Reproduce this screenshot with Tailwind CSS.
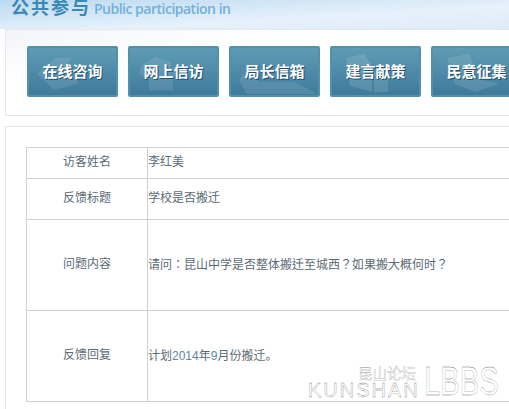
<!DOCTYPE html>
<html lang="zh-CN">
  <head>
    <meta charset="UTF-8" />
    <meta name="viewport" content="width=device-width, initial-scale=1.0" />
    <title>公共参与</title>
    <script src="https://cdn.jsdelivr.net/npm/@tailwindcss/browser@4"></script>
  </head>
  <body class="overflow-hidden">
    <div class="relative h-[409px] w-[509px] overflow-hidden bg-white font-['Liberation_Sans','Noto_Sans_CJK_SC',sans-serif]">
      <!-- header -->
      <div class="h-[29px] bg-gradient-to-br from-[#bcdaf0] via-[#e6f1fb] via-60% to-[#dfebf8]">
        <div class="flex h-[19px] items-end gap-[3px] overflow-hidden pl-[11px]">
          <span class="whitespace-nowrap text-[18px] leading-[22px] font-bold tracking-[2px] text-[#3a88b5]">公共参与</span>
          <span class="mb-[2px] whitespace-nowrap font-['Open_Sans',sans-serif] text-[14px] leading-[16px] font-semibold tracking-[-0.5px] text-[#72b0dc]">Public participation in</span>
        </div>
      </div>

      <!-- nav panel -->
      <div class="ml-[5px] h-[87px] border border-r-0 border-[#e6e8ec] bg-gradient-to-br from-[#f2f4f8] via-white via-30% to-white pl-[21px] pt-[16px]">
        <div class="flex gap-[10px]">
          <a class="relative flex h-[51px] w-[91px] shrink-0 items-center justify-center overflow-hidden rounded-[2px] border-2 border-[#4f92aa] bg-gradient-to-b from-[#5e9cb4] to-[#3f7a9c]">
            <svg class="absolute left-[5px] top-[6px]" width="50" height="38" viewBox="0 0 50 38" fill="#fff" fill-opacity="0.1"><path d="M3 20 22 4 38 4 24 20 44 20 44 30 20 36Z" /></svg>
            <span class="relative whitespace-nowrap text-[15px] leading-none font-bold text-white [text-shadow:1px_1px_0_#24506c]">在线咨询</span>
          </a>
          <a class="relative flex h-[51px] w-[91px] shrink-0 items-center justify-center overflow-hidden rounded-[2px] border-2 border-[#4f92aa] bg-gradient-to-b from-[#5e9cb4] to-[#3f7a9c]">
            <svg class="absolute left-[5px] top-[6px]" width="50" height="38" viewBox="0 0 50 38" fill="#fff" fill-opacity="0.1"><path d="M6 12 20 3 36 8 36 16 44 16 38 26 38 36 14 36 14 26 4 20Z" /></svg>
            <span class="relative whitespace-nowrap text-[15px] leading-none font-bold text-white [text-shadow:1px_1px_0_#24506c]">网上信访</span>
          </a>
          <a class="relative flex h-[51px] w-[91px] shrink-0 items-center justify-center overflow-hidden rounded-[2px] border-2 border-[#4f92aa] bg-gradient-to-b from-[#5e9cb4] to-[#3f7a9c]">
            <svg class="absolute left-[8px] top-[8px]" width="80" height="40" viewBox="0 0 80 40" fill="#fff" fill-opacity="0.1"><path d="M0 24 10 12 20 26 56 26 78 38 8 38Z" /></svg>
            <span class="relative whitespace-nowrap text-[15px] leading-none font-bold text-white [text-shadow:1px_1px_0_#24506c]">局长信箱</span>
          </a>
          <a class="relative flex h-[51px] w-[91px] shrink-0 items-center justify-center overflow-hidden rounded-[2px] border-2 border-[#4f92aa] bg-gradient-to-b from-[#5e9cb4] to-[#3f7a9c]">
            <svg class="absolute left-[12px] top-[6px]" width="50" height="40" viewBox="0 0 50 40" fill="#fff" fill-opacity="0.12"><path d="M2 4 20 0 28 12 28 38 6 32Z M30 18 44 24 44 38 30 38Z" /></svg>
            <span class="relative whitespace-nowrap text-[15px] leading-none font-bold text-white [text-shadow:1px_1px_0_#24506c]">建言献策</span>
          </a>
          <a class="relative flex h-[51px] w-[91px] shrink-0 items-center justify-center overflow-hidden rounded-[2px] border-2 border-[#4f92aa] bg-gradient-to-b from-[#5e9cb4] to-[#3f7a9c]">
            <svg class="absolute left-[12px] top-[6px]" width="60" height="40" viewBox="0 0 60 40" fill="#fff" fill-opacity="0.11"><path d="M2 4 24 0 30 14 30 24 54 30 30 38 10 30Z" /></svg>
            <span class="relative whitespace-nowrap text-[15px] leading-none font-bold text-white [text-shadow:1px_1px_0_#24506c]">民意征集</span>
          </a>
        </div>
      </div>

      <!-- detail panel -->
      <div class="ml-[5px] mt-[10px] h-[283px] border border-r-0 border-b-0 border-[#e6e8ec] pl-[20px] pt-[20px]">
        <div class="w-[520px] border border-r-0 border-[#d0d0d0] text-[12px] text-[#5b6b75]">
          <div class="flex h-[31px] border-b border-[#d0d0d0]">
            <div class="flex w-[121px] items-center justify-center border-r border-[#d0d0d0] pb-[2px]">访客姓名</div>
            <div class="flex items-center pb-[2px]">李红美</div>
          </div>
          <div class="flex h-[41px] border-b border-[#d0d0d0]">
            <div class="flex w-[121px] items-center justify-center border-r border-[#d0d0d0] pb-[2px]">反馈标题</div>
            <div class="flex items-center pb-[2px]">学校是否搬迁</div>
          </div>
          <div class="flex h-[91px] border-b border-[#d0d0d0]">
            <div class="flex w-[121px] items-center justify-center border-r border-[#d0d0d0] pb-[2px]">问题内容</div>
            <div lang="zh-TW" class="flex items-center whitespace-nowrap pb-[2px] font-['Noto_Sans_CJK_TC',sans-serif]">请问：昆山中学是否整体搬迁至城西？如果搬大概何时？</div>
          </div>
          <div class="flex h-[90px]">
            <div class="flex w-[121px] items-center justify-center border-r border-[#d0d0d0] pb-[3px]">反馈回复</div>
            <div class="flex items-center">计划<span class="text-[#5f86a3]">2014</span>年<span class="text-[#5f86a3]">9</span>月份搬迁。</div>
          </div>
        </div>
      </div>

      <!-- watermark -->
      <span class="absolute left-[358px] top-[367px] whitespace-nowrap text-[14.5px] leading-[14px] text-white [-webkit-text-stroke:0.25px_#888]">昆山论坛</span>
      <span class="absolute left-[308px] top-[381px] whitespace-nowrap text-[20px] leading-[18px] tracking-[2px] text-white [-webkit-text-stroke:0.3px_#777]">KUNSHAN</span>
      <span class="absolute left-[424px] top-[361px] origin-left scale-x-[0.73] whitespace-nowrap text-[40px] leading-[40px] text-white [-webkit-text-stroke:0.3px_#777]">LBBS</span>
    </div>
  </body>
</html>
